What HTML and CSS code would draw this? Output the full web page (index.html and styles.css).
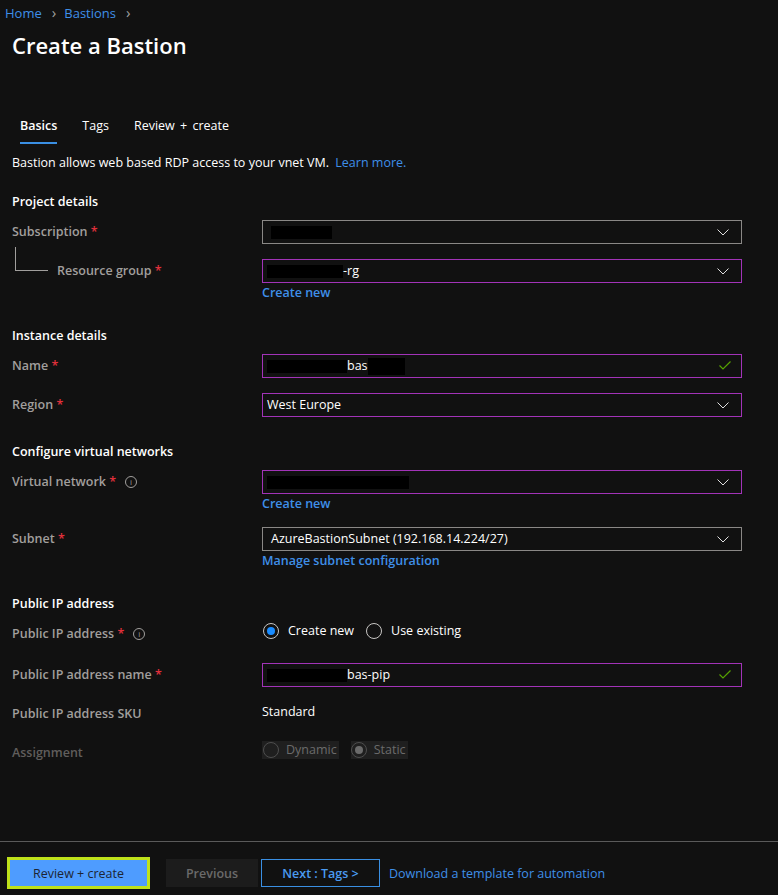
FILE: index.html
```html
<!DOCTYPE html>
<html lang="en">
<head>
    <meta charset="UTF-8">
    <title>Create a Bastion</title>
    <link rel="stylesheet" href="styles.css">
</head>
<body>
    <div class="page">
        <div class="breadcrumb">
            <a href="#">Home</a><span class="sep">&#8250;</span><a href="#">Bastions</a><span class="sep">&#8250;</span>
        </div>
        <h1 class="title">Create a Bastion</h1>

        <div class="tabs">
            <span class="tab active">Basics</span>
            <span class="tab">Tags</span>
            <span class="tab">Review + create</span>
        </div>

        <p class="intro">Bastion allows web based RDP access to your vnet VM. <a href="#">Learn more.</a></p>

        <h2 class="section">Project details</h2>
        <div class="row">
            <div class="label">Subscription <span class="req">*</span></div>
            <div class="field">
                <div class="box"><span class="redact" style="width:61px"></span><svg class="chev" viewBox="0 0 12 7"><polyline points="0.5,0.5 6,6 11.5,0.5"/></svg></div>
            </div>
        </div>
        <div class="row has-link">
            <div class="label nested"><span class="tree"></span>Resource group <span class="req">*</span></div>
            <div class="field">
                <div class="box active"><span class="redact" style="width:76px"></span>-rg<svg class="chev" viewBox="0 0 12 7"><polyline points="0.5,0.5 6,6 11.5,0.5"/></svg></div>
                <a href="#" class="link">Create new</a>
            </div>
        </div>

        <h2 class="section">Instance details</h2>
        <div class="row">
            <div class="label">Name <span class="req">*</span></div>
            <div class="field">
                <div class="box active"><span class="redact" style="width:80px"></span>bas<span class="redact tall" style="width:37px"></span><svg class="check" viewBox="0 0 12 9"><polyline points="0.5,4.5 4,8 11.5,0.5"/></svg></div>
            </div>
        </div>
        <div class="row">
            <div class="label">Region <span class="req">*</span></div>
            <div class="field">
                <div class="box active">West Europe<svg class="chev" viewBox="0 0 12 7"><polyline points="0.5,0.5 6,6 11.5,0.5"/></svg></div>
            </div>
        </div>

        <h2 class="section">Configure virtual networks</h2>
        <div class="row has-link">
            <div class="label">Virtual network <span class="req">*</span><span class="info">i</span></div>
            <div class="field">
                <div class="box active"><span class="redact" style="width:142px"></span><svg class="chev" viewBox="0 0 12 7"><polyline points="0.5,0.5 6,6 11.5,0.5"/></svg></div>
                <a href="#" class="link">Create new</a>
            </div>
        </div>
        <div class="row has-link">
            <div class="label">Subnet <span class="req">*</span></div>
            <div class="field">
                <div class="box">AzureBastionSubnet (192.168.14.224/27)<svg class="chev" viewBox="0 0 12 7"><polyline points="0.5,0.5 6,6 11.5,0.5"/></svg></div>
                <a href="#" class="link">Manage subnet configuration</a>
            </div>
        </div>

        <h2 class="section">Public IP address</h2>
        <div class="row radio-row">
            <div class="label">Public IP address <span class="req">*</span><span class="info">i</span></div>
            <div class="field radios">
                <span class="radio on"><span class="dot"></span>Create new</span>
                <span class="radio"><span class="dot"></span>Use existing</span>
            </div>
        </div>
        <div class="row">
            <div class="label">Public IP address name <span class="req">*</span></div>
            <div class="field">
                <div class="box active"><span class="redact" style="width:80px"></span>bas-pip<svg class="check" viewBox="0 0 12 9"><polyline points="0.5,4.5 4,8 11.5,0.5"/></svg></div>
            </div>
        </div>
        <div class="row">
            <div class="label">Public IP address SKU</div>
            <div class="field value">Standard</div>
        </div>
        <div class="row">
            <div class="label muted">Assignment</div>
            <div class="field radios disabled">
                <span class="radio"><span class="dot"></span>Dynamic</span>
                <span class="radio on"><span class="dot"></span>Static</span>
            </div>
        </div>
    </div>

    <div class="footer">
        <span class="btn-wrap"><button class="btn primary">Review + create</button></span>
        <button class="btn prev">Previous</button>
        <button class="btn next">Next : Tags &gt;</button>
        <a href="#" class="link foot-link">Download a template for automation</a>
    </div>
</body>
</html>
```

FILE: styles.css
```css
body {
    margin: 0;
    background: #111111;
    color: #ffffff;
    font-family: "Open Sans", "Noto Sans", sans-serif;
    font-size: 12.5px;
}
a {
    color: #3f8fe8;
    text-decoration: none;
}
.page {
    height: 841px;
    padding: 0 0 0 12px;
    box-sizing: border-box;
}
.breadcrumb {
    margin-left: -7px;
    padding-top: 2px;
    line-height: 20px;
    font-size: 13px;
}
.breadcrumb .sep {
    color: #a0a0a0;
    margin: 0 8px 0 10px;
    font-size: 15px;
}
.title {
    margin: 8px 0 0;
    font-size: 22px;
    font-weight: 600;
    line-height: 28px;
}
.tabs {
    display: flex;
    gap: 25px;
    margin: 57px 0 0 8px;
}
.tab {
    padding-bottom: 6px;
    line-height: 20px;
    border-bottom: 2px solid transparent;
}
.tab:last-child {
    word-spacing: 2px;
}
.tab.active {
    font-weight: 600;
    border-bottom-color: #3a8fe3;
}
.intro {
    margin: 9px 0 0;
    line-height: 20px;
}
.intro a {
    margin-left: 3px;
}
.section {
    margin: 20px 0 9px;
    font-size: 12.5px;
    font-weight: 600;
    line-height: 18px;
}
.row + .section {
    margin-top: 26px;
}
.row {
    display: grid;
    grid-template-columns: 250px 480px;
    margin-bottom: 15px;
}
.row.radio-row {
    margin-bottom: 17px;
}
.label {
    line-height: 24px;
    color: #a19f9d;
    font-weight: 600;
    position: relative;
}
.label.muted {
    color: #605e5c;
}
.label.nested {
    padding-left: 45px;
}
.tree {
    position: absolute;
    left: 3px;
    top: -12px;
    width: 32px;
    height: 23px;
    border-left: 1px solid #a19f9d;
    border-bottom: 1px solid #a19f9d;
}
.req {
    color: #e0303b;
}
.info {
    display: inline-block;
    width: 10px;
    height: 10px;
    margin-left: 9px;
    border: 1px solid #a19f9d;
    border-radius: 50%;
    font-size: 8px;
    line-height: 10px;
    text-align: center;
    font-weight: 400;
    vertical-align: 1px;
}
.box {
    display: flex;
    align-items: center;
    height: 24px;
    box-sizing: border-box;
    border: 1px solid #8a8886;
    padding: 0 8px;
    position: relative;
    line-height: 20px;
}
.box.active {
    border-color: #a233b8;
    padding-left: 4px;
}
.redact {
    display: inline-block;
    height: 13px;
    background: #000000;
}
.redact.tall {
    height: 17px;
}
.chev {
    position: absolute;
    right: 12px;
    top: 8px;
    width: 12px;
    height: 7px;
    fill: none;
    stroke: #e0e0e0;
    stroke-width: 1;
}
.check {
    position: absolute;
    right: 10px;
    top: 6px;
    width: 12px;
    height: 9px;
    fill: none;
    stroke: #57a300;
    stroke-width: 1.2;
}
.link {
    display: block;
    line-height: 17px;
    font-weight: 600;
    margin-top: 1px;
}
.value {
    line-height: 20px;
}
.radios {
    display: flex;
    gap: 12px;
    align-items: center;
    height: 24px;
    margin-top: -3px;
}
.radio {
    display: inline-flex;
    align-items: center;
    gap: 9px;
    line-height: 18px;
}
.dot {
    width: 16px;
    height: 16px;
    box-sizing: border-box;
    border: 1px solid #c8c6c4;
    border-radius: 50%;
    position: relative;
}
.radios .radio:first-child {
    padding-left: 1px;
}
.radio.on .dot::after {
    content: "";
    position: absolute;
    left: 3px;
    top: 3px;
    width: 8px;
    height: 8px;
    border-radius: 50%;
    background: #1a8cff;
}
.radios.disabled {
    gap: 12px;
    margin-top: -3px;
}
.radios.disabled .radio {
    gap: 7px;
    background: #1f1f1f;
    color: #6b6b6b;
    padding-right: 2px;
}
.radios.disabled .dot {
    border-color: #4e4e4e;
}
.radios.disabled .radio.on .dot::after {
    background: #6b6b6b;
}
.footer {
    border-top: 1px solid #5a5a5a;
    display: flex;
    align-items: center;
    height: 62px;
    padding-left: 7px;
}
.btn {
    font-family: inherit;
    font-size: 12.5px;
    height: 28px;
    box-sizing: border-box;
    border: 1px solid transparent;
    padding: 0;
    cursor: pointer;
}
.btn-wrap {
    display: inline-block;
    border: 3px solid #bfe21b;
    line-height: 0;
}
.btn.primary {
    width: 137px;
    background: #4e9cff;
    color: #1d2533;
    border: none;
    height: 26px;
}
.btn.prev {
    margin-left: 16px;
    width: 92px;
    background: #1c1c1c;
    color: #6a6a6a;
    font-weight: 600;
}
.btn.next {
    margin-left: 3px;
    width: 119px;
    background: transparent;
    border-color: #3a8fe3;
    color: #4a9af0;
    font-weight: 600;
}
.foot-link {
    margin-left: 9px;
    font-weight: 400;
}
```
